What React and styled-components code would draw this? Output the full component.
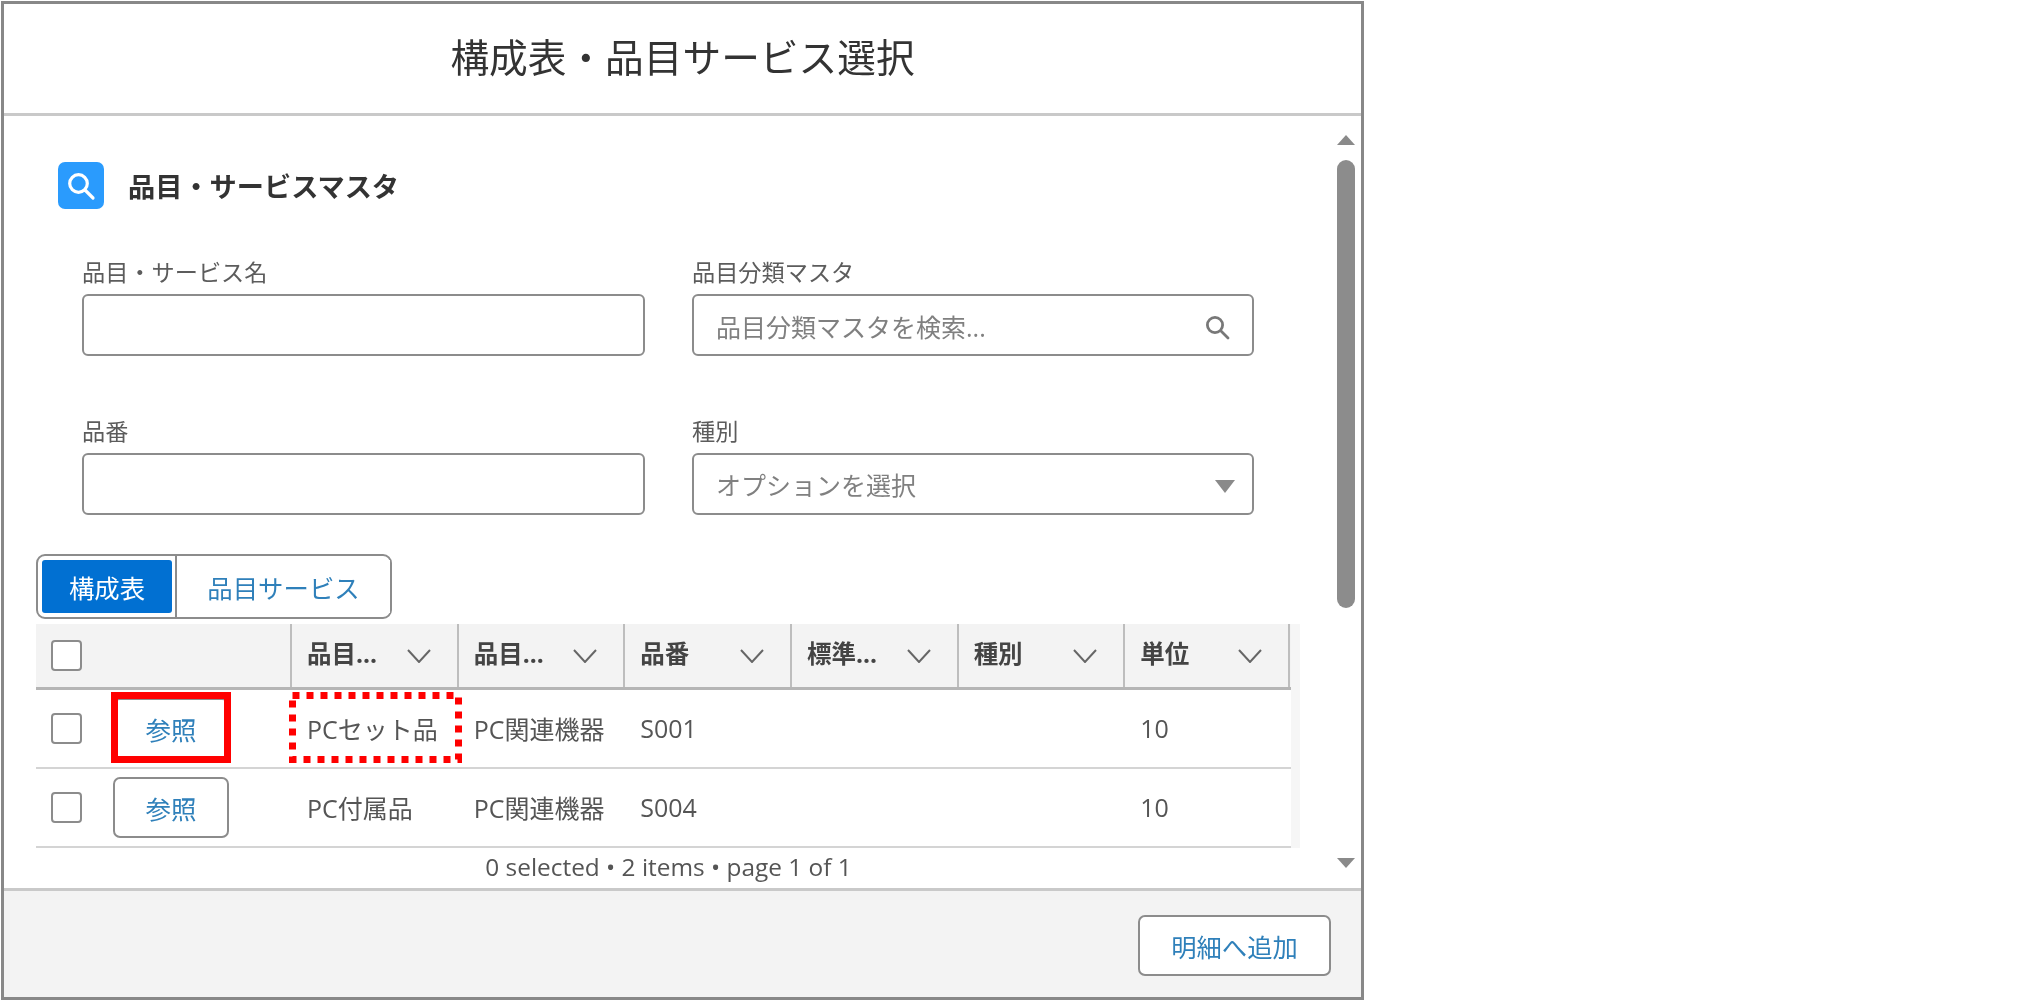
import React from "react";
import styled, { createGlobalStyle } from "styled-components";

const CJK = `"Open Sans", "Noto Sans CJK JP", sans-serif`;

const Global = createGlobalStyle`
  html, body { margin: 0; padding: 0; background: #fff; }
  * { box-sizing: border-box; }
`;

const Modal = styled.div`
  width: 1363px;
  height: 999px;
  margin: 1px 0 0 1px;
  border: 3px solid #888;
  display: flex;
  flex-direction: column;
  font-family: ${CJK};
  color: #444;
  background: #fff;
  filter: blur(0.45px);
`;

const Header = styled.header`
  height: 112px;
  flex: none;
  padding-bottom: 2px;
  border-bottom: 3px solid #c9c9c9;
  display: flex;
  align-items: center;
  justify-content: center;
`;

const Title = styled.h1`
  margin: 0;
  font-size: 38.7px;
  line-height: 1.2;
  font-weight: 400;
  color: #333;
`;

const Main = styled.main`
  flex: 1;
  min-height: 0;
  display: flex;
  overflow: hidden;
`;

const Content = styled.div`
  flex: 1;
  min-width: 0;
  padding: 46px 0 0 32px;
`;

const SectionHead = styled.div`
  display: flex;
  align-items: center;
  gap: 24px;
  margin-left: 22px;
  height: 47px;
`;

const SectionIcon = styled.span`
  width: 46px;
  height: 47px;
  border-radius: 7px;
  background: #2a9bfd;
  display: flex;
  align-items: center;
  justify-content: center;
`;

const SectionTitle = styled.h2`
  margin: 0 0 2px;
  font-size: 27.2px;
  font-weight: 700;
  color: #333;
`;

const FieldGrid = styled.div`
  display: grid;
  grid-template-columns: 563px 562px;
  column-gap: 47px;
  row-gap: 61px;
  margin: 49px 0 0 46px;
`;

const Field = styled.div`
  display: flex;
  flex-direction: column;
`;

const Label = styled.label`
  height: 36px;
  line-height: 28px;
  font-size: 23.2px;
  color: #5c5c5c;
`;

const InputBox = styled.div`
  position: relative;
  height: 62px;
  border: 2px solid #8c8c8c;
  border-radius: 6px;
  display: flex;
  align-items: center;
  padding: 0 22px;
  background: #fff;
`;

const Input = styled.input`
  flex: 1;
  min-width: 0;
  border: 0;
  outline: 0;
  padding: ${p => p.$dropdown ? "1px" : "3px"} 0 0;
  background: transparent;
  font: 400 25px ${CJK};
  &::placeholder { color: #808080; opacity: 1; }
`;

const SearchGlyph = styled.svg`
  flex: none;
  margin-top: 3px;
`;

const Triangle = styled.span`
  flex: none;
  width: 0;
  height: 0;
  border-left: ${p => p.$w / 2}px solid transparent;
  border-right: ${p => p.$w / 2}px solid transparent;
  ${p => p.$up ? "border-bottom" : "border-top"}: ${p => p.$h}px solid #8a8a8a;
`;

const SelectArrow = styled(Triangle)`
  margin: 5px -5px 0 0;
`;

const Tabs = styled.div`
  display: inline-flex;
  height: 65px;
  margin-top: 39px;
  padding: 4px 0 4px 4px;
  border: 2px solid #8c8c8c;
  border-radius: 9px;
  vertical-align: top;
`;

const Tab = styled.button`
  width: ${p => p.$w}px;
  border: 0;
  padding: 0;
  border-radius: ${p => p.$active ? "3px" : "0"};
  background: ${p => p.$active ? "#0170d2" : "#fff"};
  color: ${p => p.$active ? "#fff" : "#2f80ba"};
  font: 400 25.4px ${CJK};
`;

const TabDivider = styled.span`
  width: 2px;
  margin: -4px 0 -4px 3px;
  background: #8c8c8c;
`;

const TableWrap = styled.div`
  width: 1264px;
  margin-top: 5px;
  padding-right: 9px;
  background: #f6f6f6;
`;

const Grid = styled.div`
  display: grid;
  grid-template-columns: 254px repeat(6, 166.67px);
`;

const HeadRow = styled(Grid)`
  height: 66px;
  background: #f3f3f3;
  border-bottom: 3px solid #b5b5b5;
`;

const HeadCell = styled.div`
  height: 63px;
  border-left: 2px solid #bdbdbd;
  padding: 0 26px 0 15px;
  display: flex;
  align-items: center;
  justify-content: space-between;
  font-size: 24.5px;
  font-weight: 700;
  color: #444;
  &:last-child { border-right: 2px solid #bdbdbd; }
`;

const HeadLabel = styled.span`
  padding-bottom: 6px;
`;

const SelectCell = styled.div`
  display: flex;
  align-items: center;
  gap: 31px;
  padding-left: 15px;
`;

const Check = styled.span`
  flex: none;
  width: 31px;
  height: 31px;
  border: 2px solid #8c8c8c;
  border-radius: 4px;
  background: #fff;
`;

const Row = styled(Grid)`
  height: 79px;
  background: #fff;
  border-bottom: 2px solid #d4d4d4;
`;

const Cell = styled.div`
  position: relative;
  display: flex;
  align-items: center;
  padding: 0 0 2px 17px;
  font-size: 25px;
  color: #555;
`;

const ButtonSlot = styled.div`
  position: relative;
  display: flex;
`;

const OutlineButton = styled.button`
  width: ${p => p.$w}px;
  height: 61px;
  border: 2px solid #8c8c8c;
  border-radius: 7px;
  background: #fff;
  color: #2f80ba;
  padding: 0;
  font: 400 ${p => p.$size}px ${CJK};
`;

const RedFrame = styled.span`
  position: absolute;
  top: -6px;
  bottom: -4px;
  left: -2px;
  right: -2px;
  border: 7px solid #f00;
`;

const DottedFrame = styled.svg`
  position: absolute;
  left: -1px;
  top: 2px;
  width: 173px;
  height: 71px;
`;

const Status = styled.div`
  height: 40px;
  line-height: 38px;
  padding-right: 36px;
  text-align: center;
  font-size: 24.4px;
  color: #555;
`;

const Scrollbar = styled.div`
  flex: none;
  width: 18px;
  margin-right: 6px;
  padding: 19px 0 20px;
  display: flex;
  flex-direction: column;
  align-items: center;
`;

const Thumb = styled.div`
  width: 18px;
  height: 448px;
  margin-top: 15px;
  border-radius: 9px;
  background: #8c8c8c;
`;

const Spacer = styled.div`
  flex: 1;
`;

const Footer = styled.footer`
  flex: none;
  height: 109px;
  background: #f3f3f3;
  border-top: 3px solid #c9c9c9;
  display: flex;
  justify-content: flex-end;
  padding: 24px 30px 0 0;
`;

const Chevron = () => (
  <svg width="24" height="14" viewBox="0 0 24 14" fill="none" stroke="#666" strokeWidth="2">
    <path d="M1 1 L12 13 L23 1" />
  </svg>
);

const columns = ["品目...", "品目...", "品番", "標準...", "種別", "単位"];

const rows = [
  { name: "PCセット品", cat: "PC関連機器", code: "S001", unit: "10", marked: true },
  { name: "PC付属品", cat: "PC関連機器", code: "S004", unit: "10", marked: false },
];

export default function App() {
  return (
    <>
      <Global />
      <Modal>
        <Header>
          <Title>構成表・品目サービス選択</Title>
        </Header>
        <Main>
          <Content>
            <SectionHead>
              <SectionIcon>
                <svg width="30" height="30" viewBox="0 0 30 30" fill="none" stroke="#fff">
                  <circle cx="12.5" cy="12.5" r="8.8" strokeWidth="3.2" />
                  <path d="M19 19 L27 27" strokeWidth="3.2" strokeLinecap="round" />
                </svg>
              </SectionIcon>
              <SectionTitle>品目・サービスマスタ</SectionTitle>
            </SectionHead>

            <FieldGrid>
              <Field>
                <Label>品目・サービス名</Label>
                <InputBox><Input readOnly /></InputBox>
              </Field>
              <Field>
                <Label>品目分類マスタ</Label>
                <InputBox>
                  <Input readOnly placeholder="品目分類マスタを検索..." />
                  <SearchGlyph width="26" height="26" viewBox="0 0 26 26" fill="none" stroke="#787878" strokeWidth="2.8">
                    <circle cx="11" cy="11" r="7.6" />
                    <path d="M17 17 L24 24" strokeLinecap="round" />
                  </SearchGlyph>
                </InputBox>
              </Field>
              <Field>
                <Label>品番</Label>
                <InputBox><Input readOnly /></InputBox>
              </Field>
              <Field>
                <Label>種別</Label>
                <InputBox>
                  <Input readOnly $dropdown placeholder="オプションを選択" />
                  <SelectArrow $w={20} $h={13} />
                </InputBox>
              </Field>
            </FieldGrid>

            <Tabs>
              <Tab $active $w={130}>構成表</Tab>
              <TabDivider />
              <Tab $w={213}>品目サービス</Tab>
            </Tabs>

            <TableWrap>
              <HeadRow>
                <SelectCell><Check /></SelectCell>
                {columns.map((c, i) => (
                  <HeadCell key={i}>
                    <HeadLabel>{c}</HeadLabel>
                    <Chevron />
                  </HeadCell>
                ))}
              </HeadRow>
              {rows.map(r => (
                <Row key={r.code}>
                  <SelectCell>
                    <Check />
                    <ButtonSlot>
                      <OutlineButton $w={116} $size={25.5}>参照</OutlineButton>
                      {r.marked && <RedFrame />}
                    </ButtonSlot>
                  </SelectCell>
                  <Cell>
                    {r.name}
                    {r.marked && (
                      <DottedFrame viewBox="0 0 173 71" fill="none">
                        <rect x="3.5" y="3.5" width="166" height="64" stroke="#f00" strokeWidth="7" strokeDasharray="7 7" />
                      </DottedFrame>
                    )}
                  </Cell>
                  <Cell>{r.cat}</Cell>
                  <Cell>{r.code}</Cell>
                  <Cell />
                  <Cell />
                  <Cell>{r.unit}</Cell>
                </Row>
              ))}
            </TableWrap>
            <Status>0 selected • 2 items • page 1 of 1</Status>
          </Content>

          <Scrollbar>
            <Triangle $up $w={18} $h={10} />
            <Thumb />
            <Spacer />
            <Triangle $w={18} $h={10} />
          </Scrollbar>
        </Main>
        <Footer>
          <OutlineButton $w={193} $size={25.3}>明細へ追加</OutlineButton>
        </Footer>
      </Modal>
    </>
  );
}
